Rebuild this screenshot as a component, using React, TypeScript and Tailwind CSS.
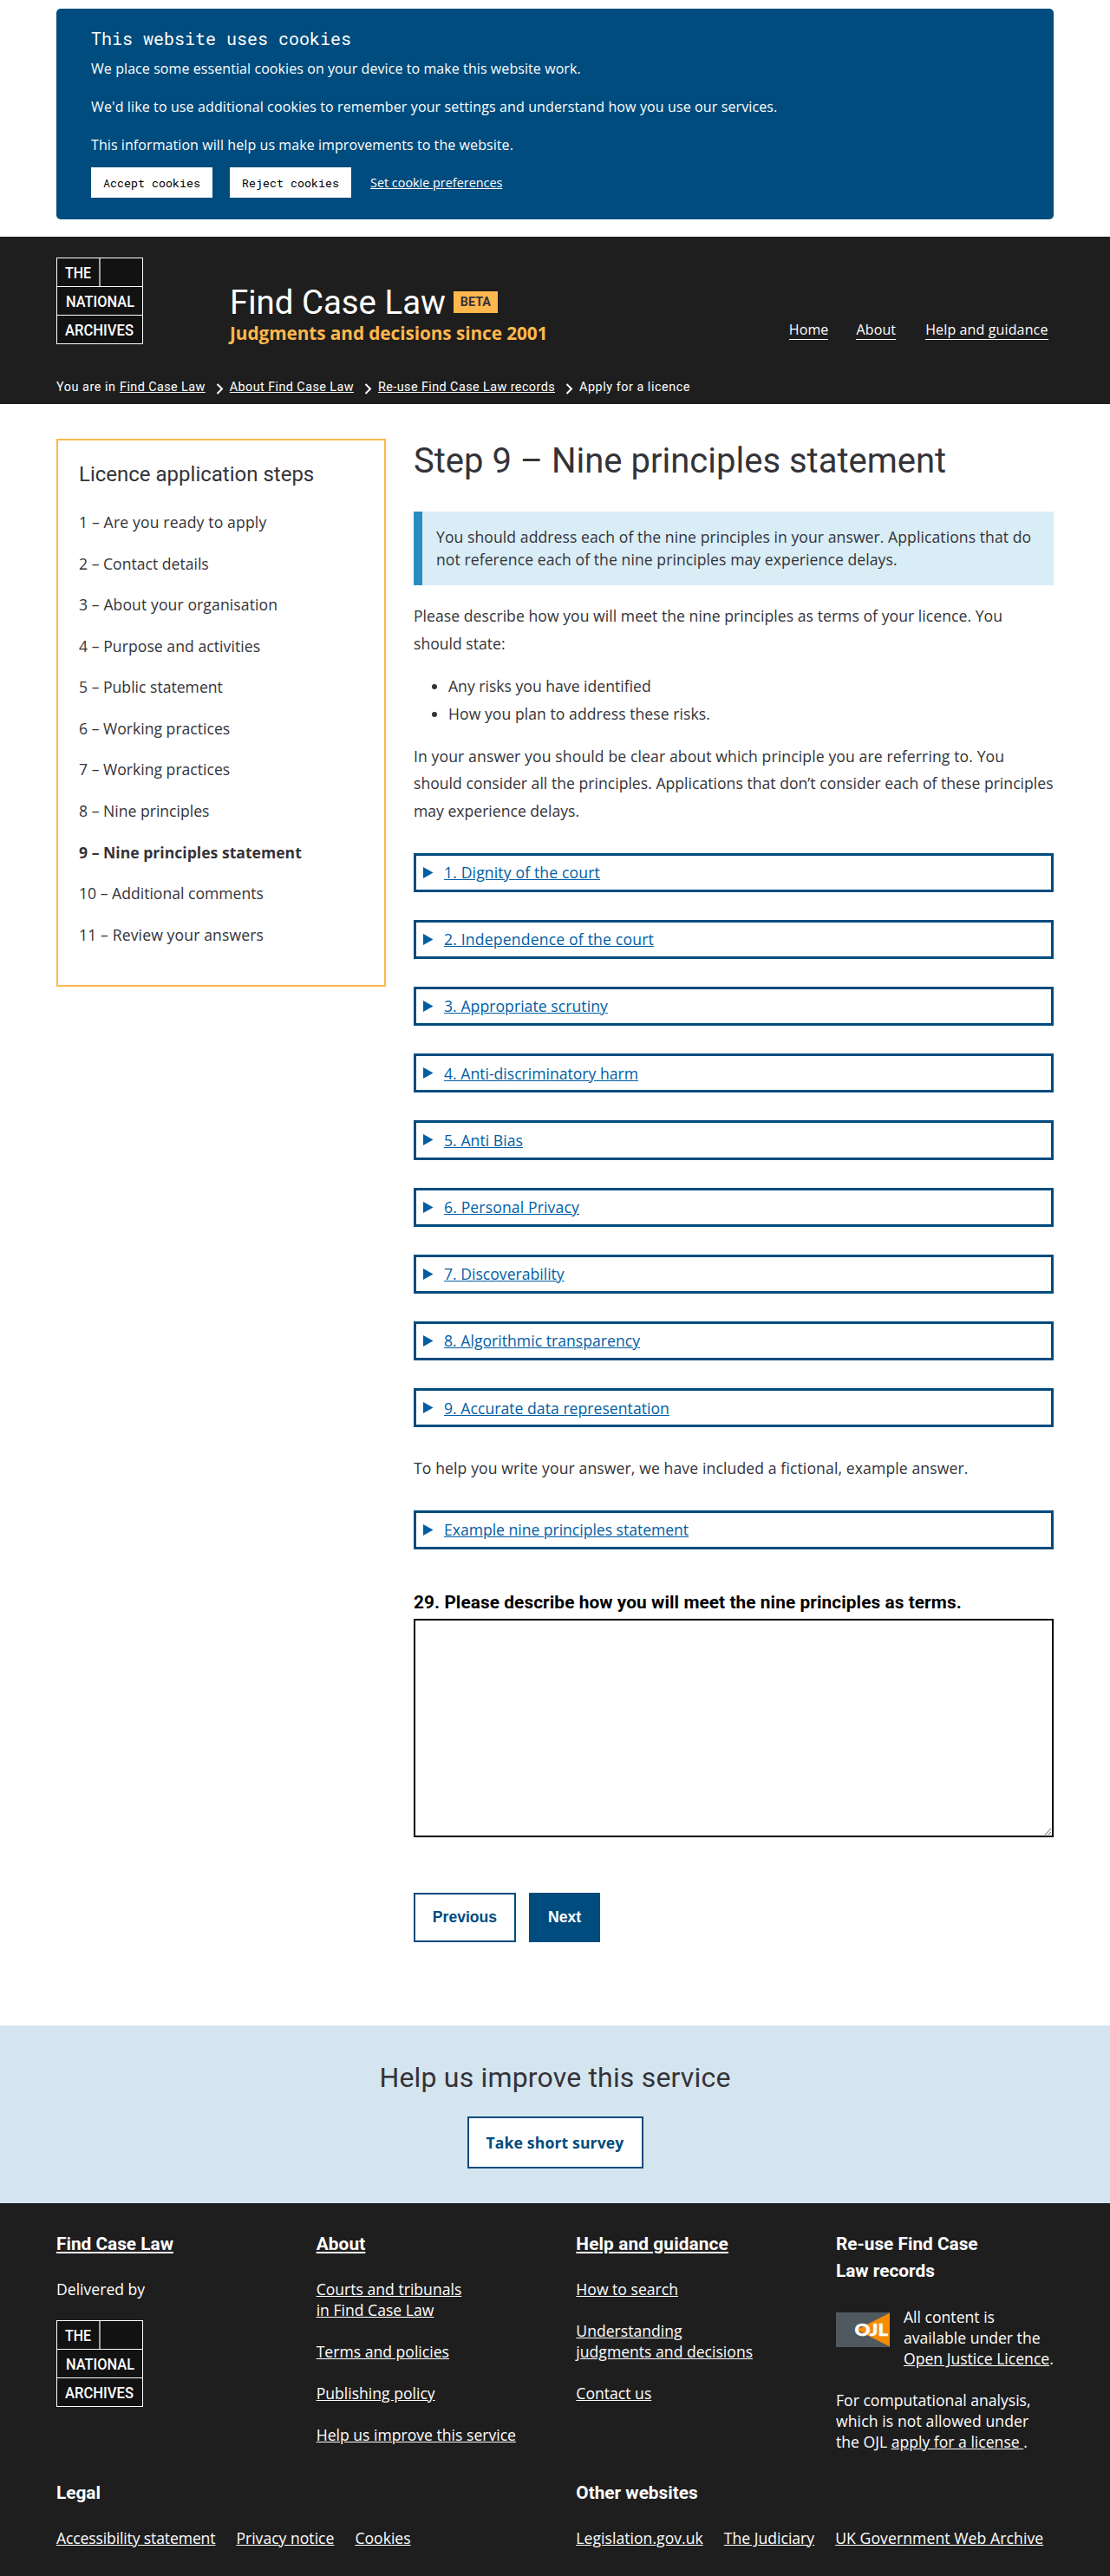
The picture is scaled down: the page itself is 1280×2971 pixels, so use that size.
import React from 'react';

const STEPS = [
  { label: 'Are you ready to apply', cls: 'tracking-[0.15px]' },
  { label: 'Contact details', cls: '' },
  { label: 'About your organisation', cls: 'tracking-[0.09px]' },
  { label: 'Purpose and activities', cls: 'tracking-[0.05px]' },
  { label: 'Public statement', cls: '' },
  { label: 'Working practices', cls: '' },
  { label: 'Working practices', cls: '' },
  { label: 'Nine principles', cls: '' },
  { label: 'Nine principles statement', cls: 'font-bold' },
  { label: 'Additional comments', cls: '' },
  { label: 'Review your answers', cls: 'tracking-[0.12px]' },
];

const PRINCIPLES = [
  { label: '1. Dignity of the court', cls: 'tracking-[0.14px]' },
  { label: '2. Independence of the court', cls: 'tracking-[0.17px]' },
  { label: '3. Appropriate scrutiny', cls: 'tracking-[0.05px]' },
  { label: '4. Anti-discriminatory harm', cls: '' },
  { label: '5. Anti Bias', cls: 'tracking-[0.05px]' },
  { label: '6. Personal Privacy', cls: 'tracking-[0.13px]' },
  { label: '7. Discoverability', cls: '' },
  { label: '8. Algorithmic transparency', cls: 'tracking-[0.02px]' },
  { label: '9. Accurate data representation', cls: 'tracking-[0.03px]' },
];

function Logo() {
  return (
    <svg width="100" height="100" viewBox="0 0 100 100" className="block" aria-label="The National Archives">
      <rect x="0.5" y="0.5" width="99" height="99" fill="#121212" stroke="#fff" />
      <path d="M0 33.5H100M0 66.5H100" stroke="#fff" strokeWidth="1.2" />
      <path d="M50 1V33" stroke="#a0a0a0" strokeWidth="2" />
      <g fill="#fff" fontFamily="Roboto, sans-serif" fontWeight="500" fontSize="18.7">
        <text x="10" y="23.7" textLength="30" lengthAdjust="spacingAndGlyphs">THE</text>
        <text x="11" y="56.7" textLength="79" lengthAdjust="spacingAndGlyphs">NATIONAL</text>
        <text x="10" y="89.5" textLength="79" lengthAdjust="spacingAndGlyphs">ARCHIVES</text>
      </g>
    </svg>
  );
}

function OjlIcon() {
  return (
    <svg width="62" height="40" viewBox="0 0 62 40" className="mt-[7px] block shrink-0" aria-label="Open Justice Licence">
      <rect width="62" height="40" fill="#50595f" />
      <path d="M62 0.5V39.5L24 20Z" fill="#f78c00" />
      <text x="21.5" y="27.3" fill="#fff" stroke="#fff" strokeWidth="0.5" fontFamily="Lato, sans-serif" fontWeight="900" fontSize="19.5" textLength="38.5" lengthAdjust="spacingAndGlyphs">OJL</text>
    </svg>
  );
}

function Chevron() {
  return (
    <svg width="9" height="13" viewBox="0 0 9 13" className="mt-[7px] mr-[7px] ml-3 block shrink-0" fill="none" stroke="#fff" strokeWidth="2">
      <path d="M1.5 1L7 6.5L1.5 12" />
    </svg>
  );
}

function Details({ label, cls = '' }: { label: string; cls?: string }) {
  return (
    <div className="mb-8 flex h-[45.2px] items-center border-[3px] border-[#004c7e] pl-2">
      <svg width="12" height="13" viewBox="0 0 12 13" className="mr-3 block"><path d="M0 0L11.5 6.5L0 13Z" fill="#005ea5" /></svg>
      <span className={'leading-[26.4px] text-[#005ea5] underline ' + cls}>{label}</span>
    </div>
  );
}

export default function App() {
  return (
    <div className="bg-white font-['Open_Sans',sans-serif] text-[17.6px] text-[#343338]">
      <div className="px-[65px] pt-2.5 pb-5">
        <section className="h-[243px] rounded-[5px] bg-[#004c7e] pt-[19px] pl-10 text-base leading-6 text-white">
          <h2 className="mb-2 font-['Roboto_Mono',monospace] text-xl leading-[30px]">This website uses cookies</h2>
          <div className="flex flex-col items-start gap-5">
            <p className="tracking-[0.08px]">We place some essential cookies on your device to make this website work.</p>
            <p className="tracking-[0.123px]">We'd like to use additional cookies to remember your settings and understand how you use our services.</p>
            <p className="tracking-[0.08px]">This information will help us make improvements to the website.</p>
          </div>
          <div className="mt-3.5 flex items-center">
            <button className="mr-5 h-[35px] w-[140px] bg-white font-['Roboto_Mono',monospace] text-[13.333px] text-black">Accept cookies</button>
            <button className="mr-[22px] h-[35px] w-[140px] bg-white font-['Roboto_Mono',monospace] text-[13.333px] text-black">Reject cookies</button>
            <a className="text-[14.4px] underline">Set cookie preferences</a>
          </div>
        </section>
      </div>

      <header className="h-[193px] bg-[#1e1e1e] px-[65px] pt-6 text-white">
        <div className="flex h-[138px]">
          <div className="w-[200px]"><Logo /></div>
          <div className="pt-[31px]">
            <div className="flex font-['Roboto',sans-serif]">
              <span className="text-[38.4px] leading-[42px]">Find Case Law</span>
              <span className="mt-2 ml-[9px] h-[25px] w-[51px] bg-[#ffb84d] text-center text-[14.4px] leading-[25px] font-bold text-[#343338]">BETA</span>
            </div>
            <p className="text-[20.8px] leading-7 font-bold tracking-[-0.08px] text-[#ffb84d]">Judgments and decisions since 2001</p>
          </div>
          <nav className="mt-[71px] mr-[6.5px] ml-auto flex h-6 text-base leading-6 tracking-[0.13px]">
            <span className="mr-8"><a className="border-b border-white">Home</a></span>
            <span className="mr-[34px]"><a className="border-b border-white">About</a></span>
            <span><a className="border-b border-white">Help and guidance</a></span>
          </nav>
        </div>
        <div className="flex h-6 font-['Roboto',sans-serif] text-[14.4px] leading-6 tracking-[0.42px]">
          <span className="mr-[4.4px] tracking-[0.55px]">You are in</span>
          <a className="underline">Find Case Law</a>
          <Chevron />
          <a className="underline">About Find Case Law</a>
          <Chevron />
          <a className="underline">Re-use Find Case Law records</a>
          <Chevron />
          <span className="tracking-[0.53px]">Apply for a licence</span>
        </div>
      </header>

      <main className="flex h-[1870px] items-start gap-8 px-[65px] pt-10">
        <aside className="h-[632px] w-[380px] shrink-0 border-2 border-[#ffb84d] px-6 pt-[21px]">
          <h2 className="mb-[22px] font-['Roboto',sans-serif] text-2xl leading-9">Licence application steps</h2>
          <ol className="flex flex-col items-start gap-[15.9px] leading-[31.68px]">
            {STEPS.map((s, i) => (
              <li key={i} className={s.cls}>{i + 1} – {s.label}</li>
            ))}
          </ol>
        </aside>

        <div className="w-[738px] leading-[31.68px] whitespace-nowrap">
          <h1 className="mt-px font-['Roboto',sans-serif] text-[40px] leading-[50px]">Step 9 – Nine principles statement</h1>
          <div className="mt-[33px] border-l-10 border-[#2b8cc4] bg-[#d9edf7] p-4 leading-[26.4px] tracking-[0.065px]">
            You should address each of the nine principles in your answer. Applications that do<br />not reference each of the nine principles may experience delays.
          </div>
          <p className="mt-5"><span className="tracking-[0.04px]">Please describe how you will meet the nine principles as terms of your licence. You</span><br />should state:</p>
          <ul className="mt-[18px] list-disc pl-10">
            <li>Any risks you have identified</li>
            <li className="tracking-[0.05px]">How you plan to address these risks.</li>
          </ul>
          <p className="mt-[17px] mb-8"><span className="tracking-[0.11px]">In your answer you should be clear about which principle you are referring to. You</span><br /><span className="tracking-[0.016px]">should consider all the principles. Applications that don’t consider each of these principles</span><br />may experience delays.</p>
          {PRINCIPLES.map((p) => <Details key={p.label} label={p.label} cls={p.cls} />)}
          <p className="mb-8 tracking-[0.11px]">To help you write your answer, we have included a fictional, example answer.</p>
          <Details label="Example nine principles statement" cls="tracking-[-0.03px]" />
          <label className="mt-[46px] mb-[2px] block font-['Roboto',sans-serif] text-[20.8px] font-bold tracking-[0.08px] text-black">29. Please describe how you will meet the nine principles as terms.</label>
          <textarea className="block h-[252px] w-full resize border-2 border-black bg-white" />
          <div className="mt-16 flex gap-[15px] font-['Liberation_Sans',sans-serif] leading-[53px] font-bold">
            <button className="h-[57px] w-[118px] border-2 border-[#004c7e] bg-white text-[#004c7e]">Previous</button>
            <button className="h-[57px] w-[82px] border-2 border-[#004c7e] bg-[#004c7e] text-white">Next</button>
          </div>
        </div>
      </main>

      <section className="flex h-[205px] flex-col items-center bg-[#d4e5ef] pt-9">
        <h2 className="font-['Roboto',sans-serif] text-[32px] leading-[48px] tracking-[0.18px]">Help us improve this service</h2>
        <a className="mt-[21px] flex h-[60px] w-[203px] items-center justify-center border-2 border-[#004c7e] bg-white font-bold tracking-[0.13px] text-[#004c7e]">Take short survey</a>
      </section>

      <footer className="h-[430px] bg-[#1e1e1e] px-[65px] pt-[31.5px] leading-6 text-white">
        <div className="grid h-[287px] grid-cols-4 gap-[48.67px]">
          <div className="flex flex-col items-start gap-6">
            <h2 className="font-['Roboto',sans-serif] text-[20.8px] leading-[31.2px] font-bold underline">Find Case Law</h2>
            <p>Delivered by</p>
            <Logo />
          </div>
          <div className="flex flex-col items-start gap-6 whitespace-nowrap">
            <h2 className="font-['Roboto',sans-serif] text-[20.8px] leading-[31.2px] font-bold tracking-[0.12px] underline">About</h2>
            <a className="underline">Courts and tribunals<br />in Find Case Law</a>
            <a className="underline">Terms and policies</a>
            <a className="underline">Publishing policy</a>
            <a className="underline">Help us improve this service</a>
          </div>
          <div className="flex flex-col items-start gap-6 whitespace-nowrap">
            <h2 className="font-['Roboto',sans-serif] text-[20.8px] leading-[31.2px] font-bold tracking-[0.12px] underline">Help and guidance</h2>
            <a className="underline">How to search</a>
            <a className="underline">Understanding<br />judgments and decisions</a>
            <a className="underline">Contact us</a>
          </div>
          <div className="flex flex-col items-start gap-6 whitespace-nowrap">
            <h2 className="mb-px font-['Roboto',sans-serif] text-[20.8px] leading-[31.2px] font-bold">Re-use Find Case<br />Law records</h2>
            <div className="flex gap-4">
              <OjlIcon />
              <p>All content is<br />available under the<br /><a className="underline">Open Justice Licence</a>.</p>
            </div>
            <p>For computational analysis,<br /><span className="tracking-[0.1px]">which is not allowed under</span><br />the OJL <a className="underline">apply for a license </a>.</p>
          </div>
        </div>
        <div className="grid grid-cols-2 gap-[48.67px] whitespace-nowrap">
          <div>
            <h2 className="mb-6 font-['Roboto',sans-serif] text-[20.8px] leading-[31.2px] font-bold">Legal</h2>
            <div className="flex gap-6">
              <a className="tracking-[-0.14px] underline">Accessibility statement</a>
              <a className="underline">Privacy notice</a>
              <a className="underline">Cookies</a>
            </div>
          </div>
          <div>
            <h2 className="mb-6 font-['Roboto',sans-serif] text-[20.8px] leading-[31.2px] font-bold">Other websites</h2>
            <div className="flex gap-6">
              <a className="tracking-[0.03px] underline">Legislation.gov.uk</a>
              <a className="underline">The Judiciary</a>
              <a className="tracking-[0.08px] underline">UK Government Web Archive</a>
            </div>
          </div>
        </div>
      </footer>
    </div>
  );
}
